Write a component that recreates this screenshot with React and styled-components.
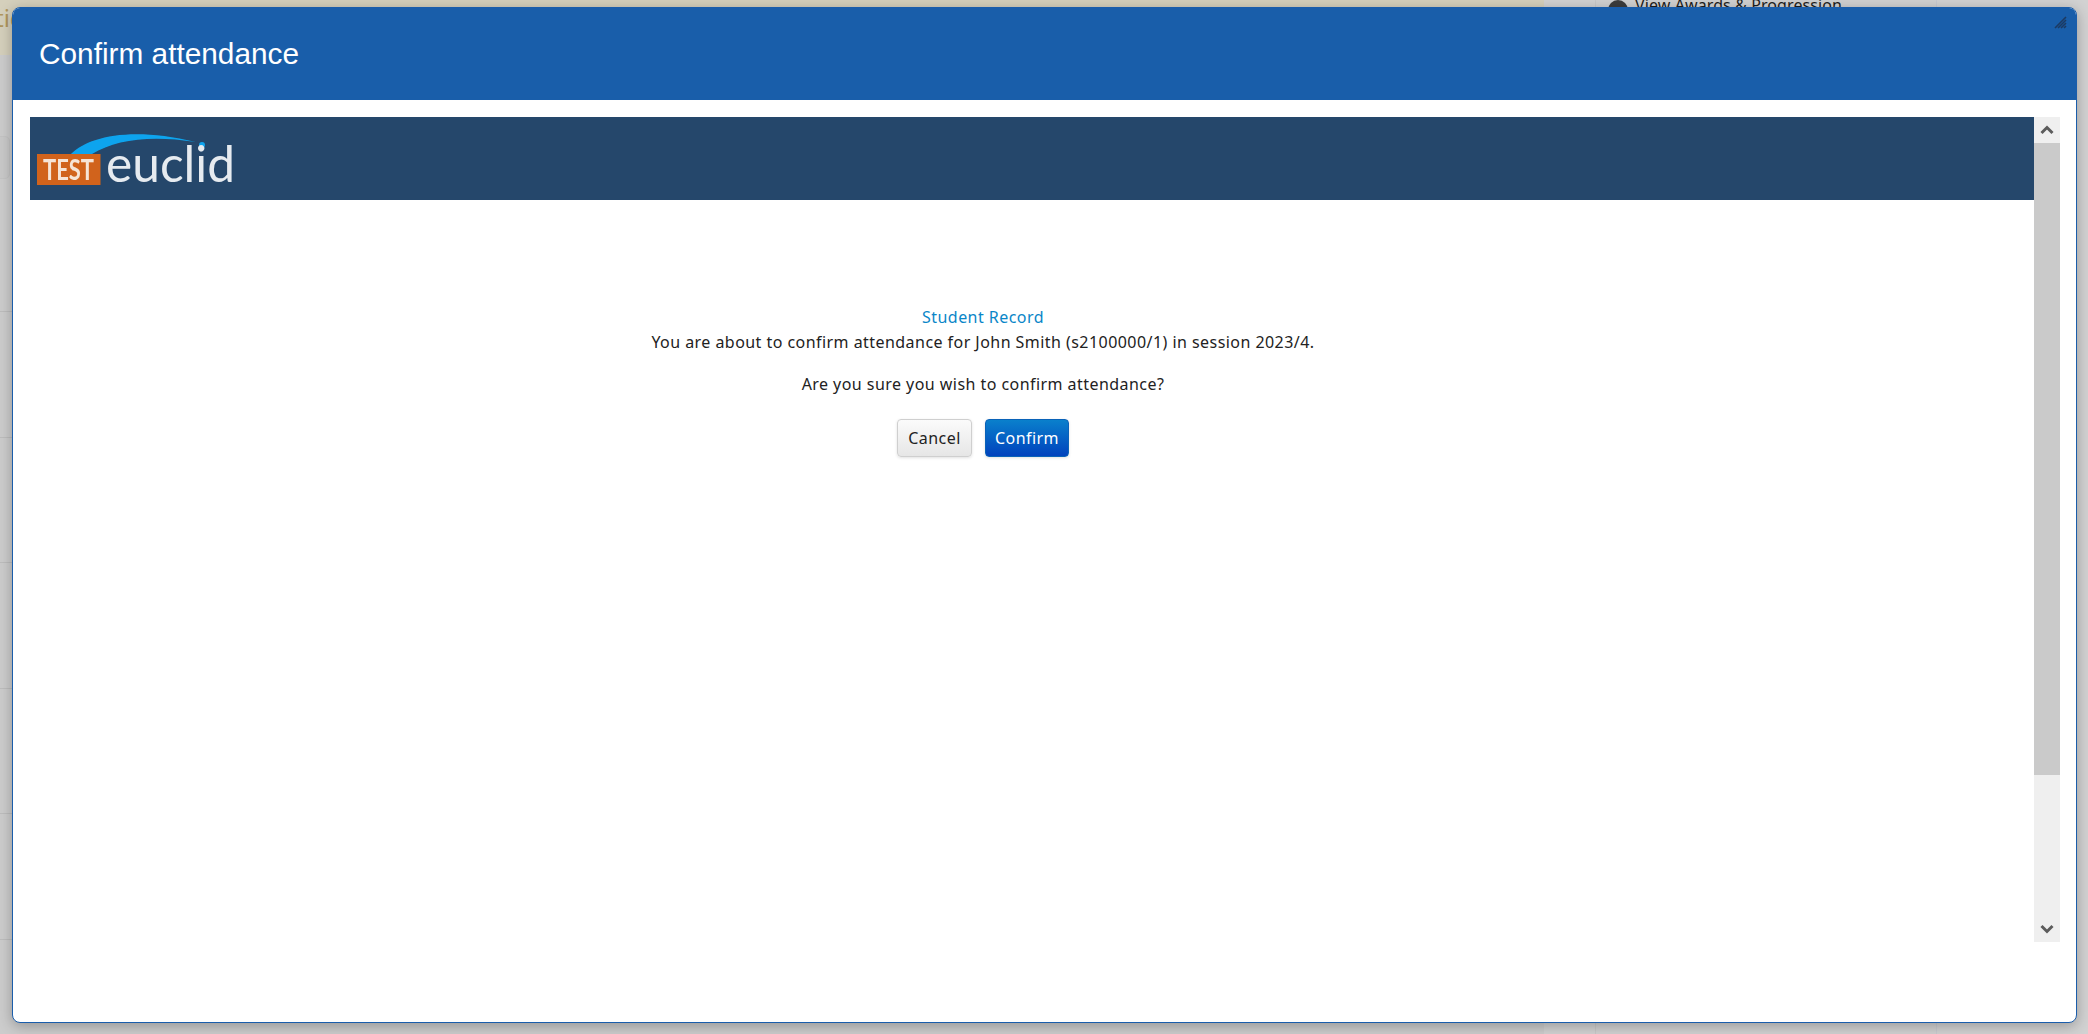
import React from "react";
import styled, { createGlobalStyle } from "styled-components";

const GlobalStyle = createGlobalStyle`
  html, body {
    margin: 0;
    padding: 0;
    height: 100%;
    overflow: hidden;
    background: #cccccc;
    font-family: "Noto Sans", "Liberation Sans", sans-serif;
  }
`;

const Page = styled.div`
  display: flex;
  width: 2088px;
  height: 1034px;
  overflow: hidden;
  background: #cccccc;
`;

const Main = styled.div`
  width: 1544px;
  display: flex;
  flex-direction: column;
`;

const TitleBand = styled.div`
  height: 55px;
  flex: none;
  background: #d5d0bc;
  color: #b0965c;
  font-size: 24px;
  line-height: 30px;
  padding-top: 3px;
  box-sizing: border-box;
  overflow: hidden;
  text-indent: -5px;
`;

const FilterArea = styled.div`
  height: 257px;
  flex: none;
  padding-top: 81px;
  box-sizing: border-box;
  border-bottom: 1px solid #bdbdbd;
`;

const FilterBox = styled.div`
  width: 16px;
  height: 41px;
  margin-left: -8px;
  background: #c9c9c9;
  border: 1px solid #c4c4c4;
  border-radius: 5px;
`;

const Row = styled.div`
  height: 125.6px;
  flex: none;
  box-sizing: border-box;
  border-bottom: 1px solid #bdbdbd;
`;

const Sidebar = styled.div`
  width: 544px;
  padding-left: 51px;
  box-sizing: border-box;
  background: #d2d2d2;
`;

const SidePanel = styled.div`
  width: 342px;
  height: 100%;
  padding-left: 12px;
  box-sizing: border-box;
  background: #d1d1d1;
  border-left: 1px solid #c8c8c8;
  border-right: 1px solid #c8cad0;
`;

const SideLink = styled.div`
  height: 14px;
  display: flex;
  align-items: flex-end;
  gap: 7px;
  font-size: 16px;
  line-height: 18px;
  letter-spacing: 0.1px;
  color: #1e1e1e;
  white-space: nowrap;
`;

const SideIcon = styled.span`
  flex: none;
  width: 20px;
  height: 20px;
  margin-bottom: -6px;
  border-radius: 50%;
  background: #3c3c3c;
`;

const Dialog = styled.div`
  position: absolute;
  left: 12px;
  top: 7px;
  width: 2065px;
  height: 1016px;
  box-sizing: border-box;
  display: flex;
  flex-direction: column;
  background: #ffffff;
  border: 1px solid #1a5dab;
  border-radius: 8px;
  box-shadow: 0 3px 14px rgba(0, 0, 0, 0.28);
  overflow: hidden;
`;

const DialogHeader = styled.header`
  flex: none;
  height: 92px;
  padding-left: 26px;
  display: flex;
  align-items: center;
  background: #195eaa;
`;

const DialogTitle = styled.h1`
  margin: 0;
  font-family: "Liberation Sans", Arial, sans-serif;
  font-weight: 400;
  font-size: 29.8px;
  color: #ffffff;
`;

const ResizeGrip = styled.svg`
  position: absolute;
  right: 8px;
  top: 7px;
`;

const DialogBody = styled.div`
  flex: 1;
  min-height: 0;
  padding: 17px 16px 80px 17px;
  display: flex;
`;

const Frame = styled.div`
  flex: 1;
  display: flex;
  flex-direction: column;
  min-width: 0;
`;

const LogoBar = styled.div`
  flex: none;
  height: 83px;
  background: #25476b;
`;

const Message = styled.div`
  padding: 105px 98px 0 0;
  display: flex;
  flex-direction: column;
  align-items: center;
  font-size: 16px;
  letter-spacing: 0.45px;
  line-height: 25px;
  color: #222222;
`;

const Section = styled.div`
  color: #0a86c8;
`;

const Question = styled.p`
  margin: 17px 0 0;
`;

const Actions = styled.div`
  margin-top: 22px;
  display: flex;
  gap: 13px;
`;

const Button = styled.button`
  height: 38px;
  box-sizing: border-box;
  font: inherit;
  letter-spacing: inherit;
  line-height: 1;
  padding: 0;
  width: ${props => (props.$primary ? "84px" : "75px")};
  border-radius: 4px;
  border: 1px solid ${props => (props.$primary ? "#0a62b8" : "#cfcfcf")};
  color: ${props => (props.$primary ? "#ffffff" : "#222222")};
  background: ${props =>
    props.$primary
      ? "linear-gradient(#0a80cc, #0042bd)"
      : "linear-gradient(#fbfbfb, #e6e6e6)"};
  box-shadow: 0 1px 3px rgba(0, 0, 0, 0.12);
`;

const Scrollbar = styled.div`
  flex: none;
  width: 26px;
  display: flex;
  flex-direction: column;
  background: #efefef;
`;

const ScrollArrow = styled.div`
  flex: none;
  height: 26px;
  display: flex;
  align-items: center;
  justify-content: center;
`;

const ScrollThumb = styled.div`
  flex: none;
  height: 632px;
  background: #cacaca;
`;

const ScrollTrack = styled.div`
  flex: 1;
`;

function Chevron({ down }) {
  return (
    <svg width="14" height="14" viewBox="0 0 14 14" fill="none">
      <polyline
        points={down ? "1.5,4 7,9.5 12.5,4" : "1.5,10 7,4.5 12.5,10"}
        stroke="#5c5c5c"
        strokeWidth="3"
      />
    </svg>
  );
}

function Logo() {
  return (
    <svg width="220" height="83" viewBox="0 0 220 83">
      <defs>
        <filter id="soft" x="-5%" y="-5%" width="110%" height="110%">
          <feGaussianBlur stdDeviation="0.6" />
        </filter>
      </defs>
      <g filter="url(#soft)">
        <path d="M41 37C58 20 100 9 166 25C122 18 86 22 62 37Z" fill="#0fa4ee" />
        <circle cx="172" cy="28" r="3" fill="#0fa4ee" />
        <rect x="7" y="37" width="63.5" height="31" fill="#d1641c" />
        <text
          x="13"
          y="63"
          fontFamily="Lato, sans-serif"
          fontWeight="700"
          fontSize="29"
          textLength="51"
          lengthAdjust="spacingAndGlyphs"
          fill="#f6e4d6"
        >
          TEST
        </text>
        <text
          x="76"
          y="65"
          fontFamily="Lato, sans-serif"
          fontWeight="400"
          fontSize="50"
          textLength="129"
          lengthAdjust="spacingAndGlyphs"
          fill="#e6ebf0"
        >
          euclid
        </text>
      </g>
    </svg>
  );
}

export default function App() {
  return (
    <>
      <GlobalStyle />
      <Page>
        <Main>
          <TitleBand>tic</TitleBand>
          <FilterArea>
            <FilterBox />
          </FilterArea>
          {[0, 1, 2, 3, 4, 5].map(i => (
            <Row key={i} />
          ))}
        </Main>
        <Sidebar>
          <SidePanel>
            <SideLink>
              <SideIcon />
              View Awards &amp; Progression
            </SideLink>
          </SidePanel>
        </Sidebar>
      </Page>
      <Dialog>
        <DialogHeader>
          <DialogTitle>Confirm attendance</DialogTitle>
          <ResizeGrip width="14" height="14" viewBox="0 0 14 14">
            <path
              d="M1 13L12 2M4 13L12 5M7 13L12 8M10 13L12 11"
              stroke="#1c3a62"
              strokeWidth="1.6"
            />
          </ResizeGrip>
        </DialogHeader>
        <DialogBody>
          <Frame>
            <LogoBar>
              <Logo />
            </LogoBar>
            <Message>
              <Section>Student Record</Section>
              <div>
                You are about to confirm attendance for John Smith (s2100000/1)
                in session 2023/4.
              </div>
              <Question>Are you sure you wish to confirm attendance?</Question>
              <Actions>
                <Button>Cancel</Button>
                <Button $primary>Confirm</Button>
              </Actions>
            </Message>
          </Frame>
          <Scrollbar>
            <ScrollArrow>
              <Chevron />
            </ScrollArrow>
            <ScrollThumb />
            <ScrollTrack />
            <ScrollArrow>
              <Chevron down />
            </ScrollArrow>
          </Scrollbar>
        </DialogBody>
      </Dialog>
    </>
  );
}
